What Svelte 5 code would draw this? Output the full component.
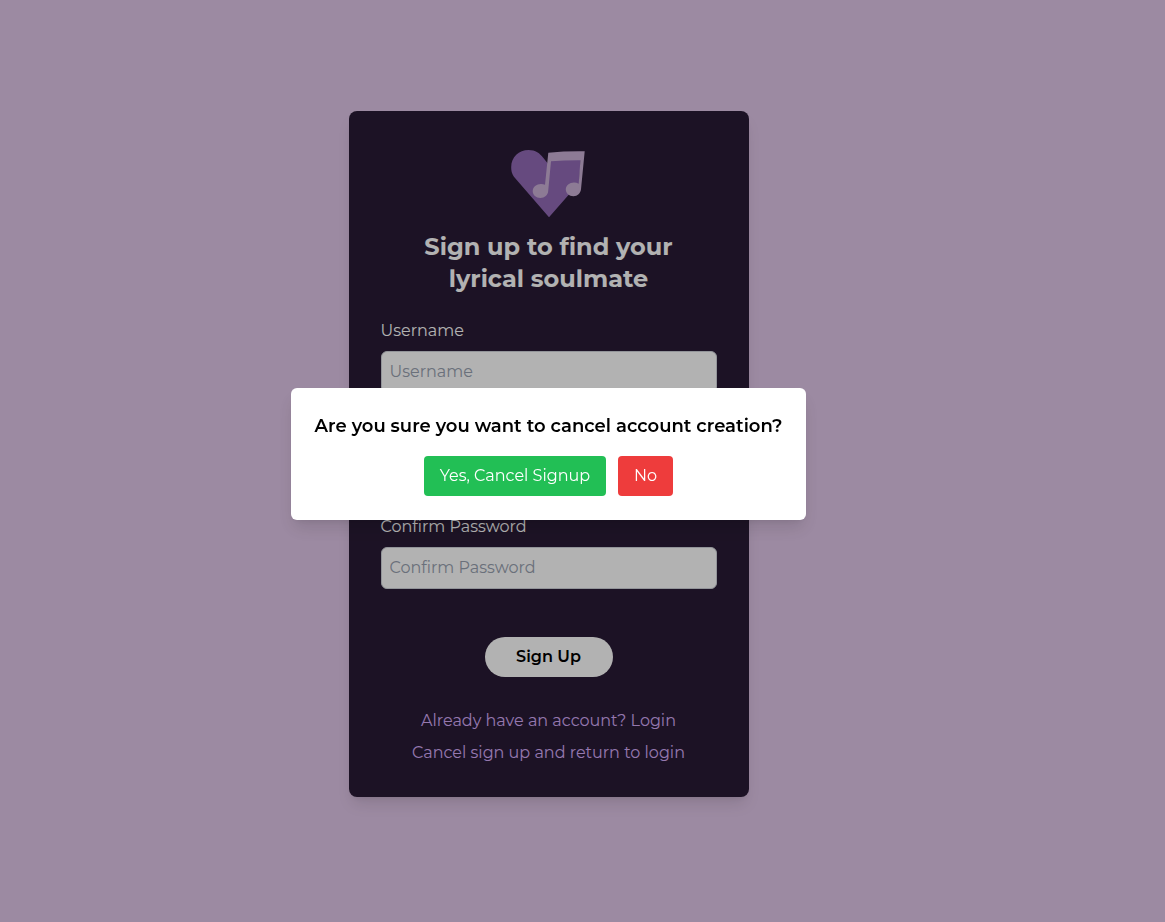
<script>
  let open = $state(true);
  const fields = [
    { id: 'username', label: 'Username', type: 'text' },
    { id: 'password', label: 'Password', type: 'password' },
    { id: 'confirm-password', label: 'Confirm Password', type: 'password' }
  ];
</script>

<main class="page">
  <section class="card">
    <svg class="logo" viewBox="0 0 80 80" aria-hidden="true">
      <path
        class="heart"
        d="M40 74.200 L6 35 C2.500 31 2.200 27 2.200 24 C2.200 14 10 7 19.500 7 C26.500 7 31 10.500 34 14.500 L40 22 L42 14 L72 14 L70 42 L59.500 52 Z"
      />
      <path
        class="note"
        fill-rule="evenodd"
        d="M39.300 9.700 Q57 8 75.700 8.300 L72 46.300 C71.500 50.500 68.500 53.200 64.500 53.200 C60 53.200 56.800 50.200 56.800 46.500 C56.800 42.500 60.500 39.500 65 39.500 Q67.500 39.500 69.700 40.700 L71.400 17.300 Q56 17.200 42 18.300 L39.200 48 C39 52 35.500 55 31.500 55 C27 55 23.700 52 23.700 48.300 C23.700 44 27.500 41 32 41 Q34.200 41 36 41.700 Z"
      />
    </svg>
    <h1>Sign up to find your lyrical soulmate</h1>
    <form onsubmit={(e) => e.preventDefault()}>
      {#each fields as field}
        <div class="field">
          <label for={field.id}>{field.label}</label>
          <input id={field.id} type={field.type} placeholder={field.label} />
        </div>
      {/each}
      <button class="submit" type="submit">Sign Up</button>
    </form>
    <nav class="links">
      <a href="#login">Already have an account? Login</a>
      <a href="#cancel" onclick={() => (open = true)}>Cancel sign up and return to login</a>
    </nav>
  </section>
</main>

{#if open}
  <div class="overlay">
    <div class="dialog" role="dialog" aria-modal="true" aria-labelledby="dialog-title">
      <h2 id="dialog-title">Are you sure you want to cancel account creation?</h2>
      <div class="actions">
        <button class="yes" type="button" onclick={() => (open = false)}>Yes, Cancel Signup</button>
        <button class="no" type="button" onclick={() => (open = false)}>No</button>
      </div>
    </div>
  </div>
{/if}

<style>
  :global(body) {
    background: #e0c6e8;
    font-family: Montserrat, Inter, sans-serif;
    font-size: 16px;
    line-height: 24px;
  }

  .page,
  .overlay {
    box-sizing: border-box;
    display: flex;
    align-items: center;
    justify-content: center;
    padding: 0 68px 14px 0;
  }

  .page {
    min-height: 100vh;
  }

  .overlay {
    position: fixed;
    inset: 0;
    background: rgb(0 0 0 / 30%);
  }

  .card {
    box-sizing: border-box;
    display: flex;
    flex-direction: column;
    align-items: center;
    width: 100%;
    max-width: 400px;
    padding: 32px;
    border-radius: 8px;
    background: #291b35;
    color: #fff;
    box-shadow: 0 10px 15px -3px rgb(0 0 0 / 10%), 0 4px 6px -4px rgb(0 0 0 / 10%);
  }

  .logo {
    width: 80px;
    height: 80px;
    margin-bottom: 8px;
  }

  .heart {
    fill: #926ab7;
  }

  .note {
    fill: #cbb1d6;
  }

  h1 {
    max-width: 288px;
    margin: 0 0 24px;
    font-size: 24px;
    font-weight: 700;
    line-height: 32px;
    text-align: center;
  }

  form {
    display: flex;
    flex-direction: column;
    gap: 24px;
    width: 100%;
  }

  .field {
    display: flex;
    flex-direction: column;
    gap: 8px;
  }

  input {
    box-sizing: border-box;
    width: 100%;
    height: 42px;
    padding: 7px 8px 9px;
    border: 1px solid #d1d5db;
    border-radius: 6px;
    background: #fff;
    color: #000;
    font: inherit;
  }

  input::placeholder {
    color: #98a1b0;
    opacity: 1;
  }

  button {
    border: 0;
    font: inherit;
    cursor: pointer;
  }

  .submit {
    align-self: center;
    width: 128px;
    margin-top: 24px;
    padding: 8px 16px;
    border-radius: 20px;
    background: #fff;
    color: #000;
    font-weight: 600;
  }

  .links {
    display: flex;
    flex-direction: column;
    align-items: center;
    gap: 8px;
    margin-top: 32px;
  }

  a {
    color: #d6adfa;
    text-decoration: none;
  }

  .dialog {
    padding: 24px;
    border-radius: 6px;
    background: #fff;
    color: #000;
    text-align: center;
    box-shadow: 0 10px 18px -2px rgb(0 0 0 / 12%), 0 4px 6px -4px rgb(0 0 0 / 10%);
  }

  h2 {
    margin: 0 0 16px;
    font-size: 18px;
    font-weight: 600;
    line-height: 28px;
  }

  .actions {
    display: flex;
    justify-content: center;
    gap: 12px;
  }

  .actions button {
    padding: 8px 16px;
    border-radius: 4px;
    color: #fff;
  }

  .actions .yes {
    background: #22bf55;
  }

  .actions .no {
    background: #ee3c3c;
  }
</style>
